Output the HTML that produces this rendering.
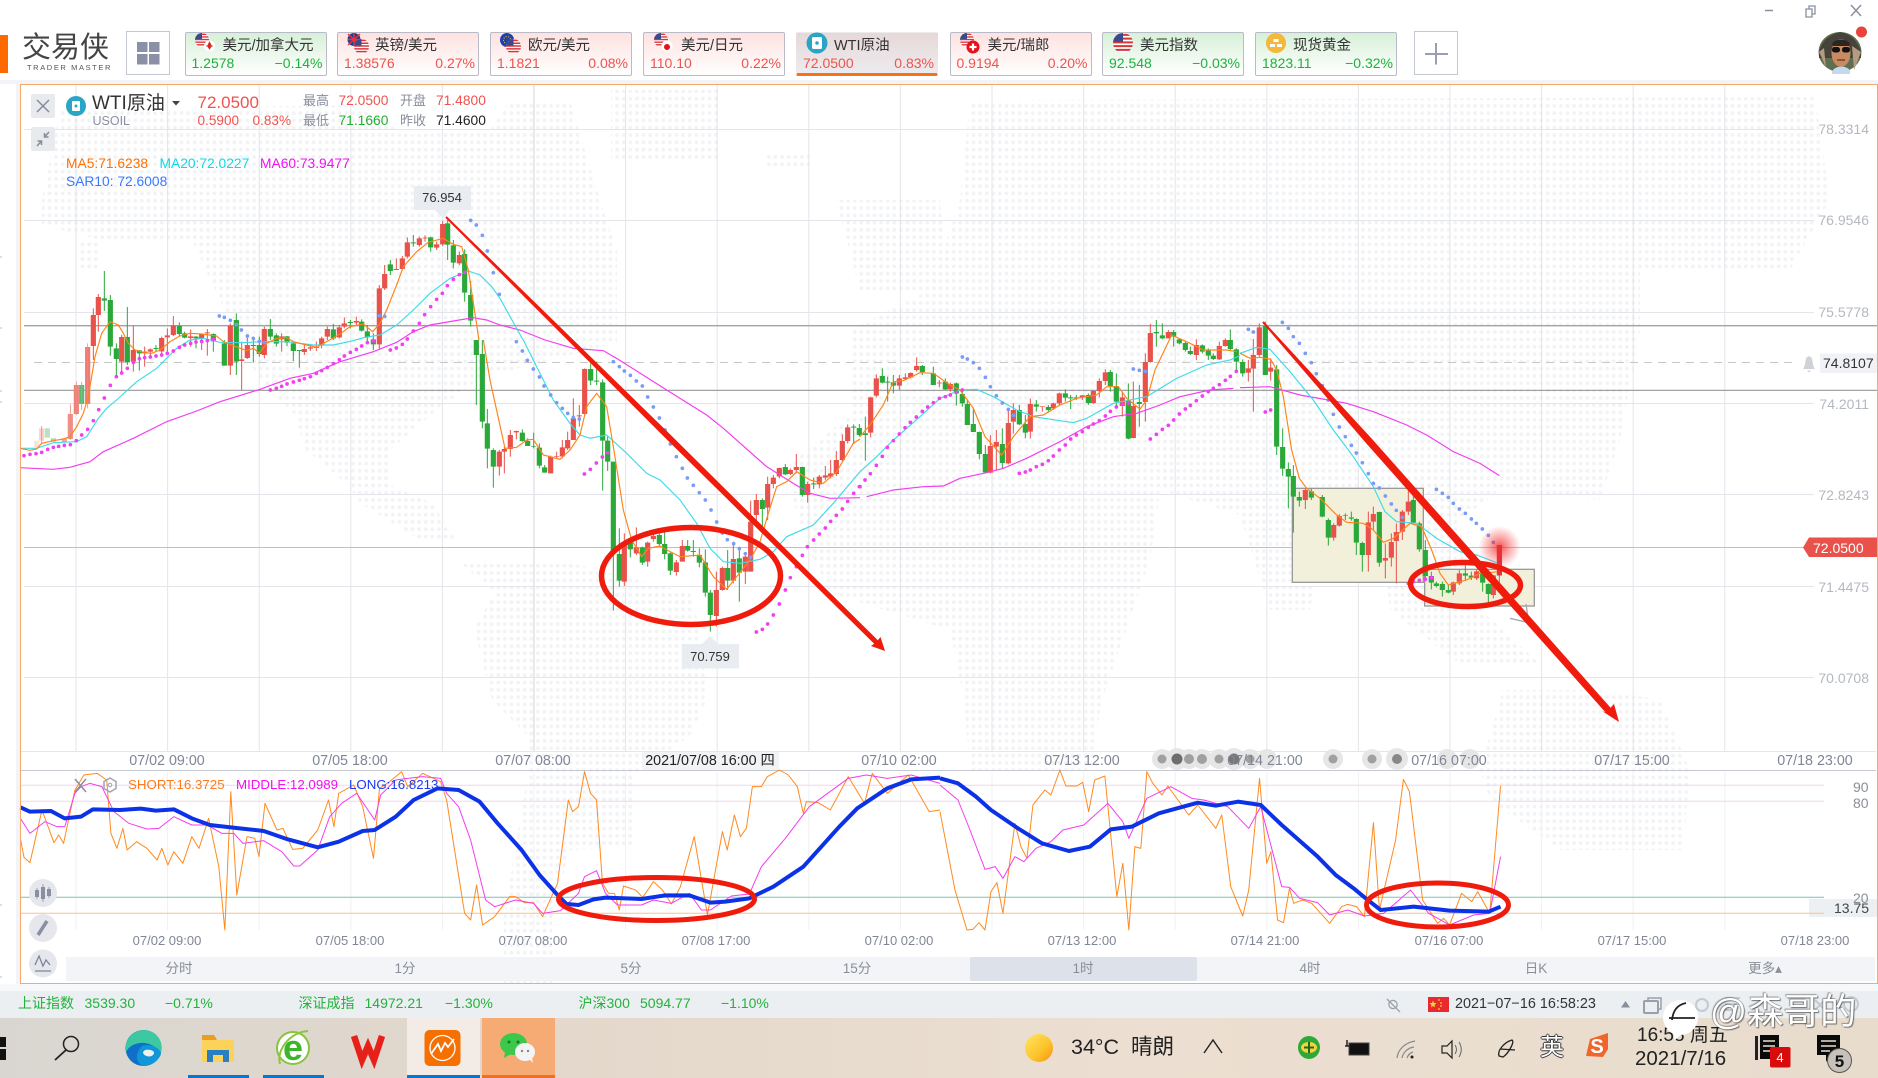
<!DOCTYPE html>
<html lang="zh"><head><meta charset="utf-8"><title>交易侠</title>
<style>
html,body{margin:0;padding:0;background:#fff}
#p{position:relative;width:1878px;height:1078px;overflow:hidden;background:#fff;font-family:"Liberation Sans","Noto Sans CJK SC",sans-serif;color:#333}
.a{position:absolute;box-sizing:border-box}
.t{position:absolute;white-space:nowrap;line-height:1}
.c{transform:translateX(-50%)}
.r{transform:translateX(-100%)}
.tab{position:absolute;top:32px;width:142px;height:44px;box-sizing:border-box;border:1px solid #b9bcc8;border-radius:2px}
.up{background:linear-gradient(#fde2e0,#fff)}
.dn{background:linear-gradient(#d7f0d8,#fff)}
.tab b{position:absolute;left:37px;top:5px;font-weight:400;font-size:14.5px;line-height:17px;color:#333;white-space:nowrap}
.tab i{position:absolute;left:6px;top:23px;font-style:normal;font-size:14px;line-height:15px;white-space:nowrap}
.tab u{position:absolute;right:3px;top:23px;text-decoration:none;font-size:14px;line-height:15px;white-space:nowrap}
.up i,.up u{color:#f0524c}.dn i,.dn u{color:#1cb238}
.ax{font-size:14.3px;color:#808696;top:754px}
.ax2{font-size:13px;color:#808696;top:934px}
.pr{font-size:14px;color:#b4b8c0;left:1869px}
.per{font-size:13.5px;color:#8a8e98;top:962px}
.g{font-size:14px;color:#22b23a;top:996px}
</style></head><body><div id="p">

<!-- panel backgrounds -->
<div class="a" style="left:0;top:80px;width:1878px;height:4px;background:#f2f4f7"></div>
<div class="a" style="left:16px;top:84px;width:4px;height:900px;background:#f2f4f7"></div>
<div class="a" style="left:0;top:984px;width:1878px;height:7px;background:#f7f8fa"></div>
<div class="a" style="left:0;top:991px;width:1878px;height:27px;background:#ebeff2"></div>
<div class="a" style="left:0;top:1018px;width:1878px;height:60px;background:linear-gradient(90deg,#d9d6d1,#e3d8cb 30%,#ecdfd1 60%,#e8dccd)"></div>
<div class="a" style="left:66px;top:957px;width:1809px;height:24px;background:#f2f4f7"></div>
<div class="a" style="left:970px;top:957px;width:227px;height:24px;background:#dde2ea;border-radius:2px"></div>
<div class="a" style="left:642px;top:751px;width:137px;height:19px;background:#f1f3f5"></div>
<div class="a" style="left:1809px;top:899px;width:68px;height:18px;background:#ecf0f3"></div>

<svg class="a" style="left:0;top:0" width="1878" height="1078" viewBox="0 0 1878 1078" xmlns="http://www.w3.org/2000/svg">
<defs>
<pattern id="dots" width="6.6" height="7.3" patternUnits="userSpaceOnUse"><circle cx="3.3" cy="3.6" r="1.9" fill="#f2f3f5"/></pattern>
<radialGradient id="glow"><stop offset="0" stop-color="#f01818" stop-opacity=".75"/><stop offset=".55" stop-color="#f53030" stop-opacity=".35"/><stop offset="1" stop-color="#f53030" stop-opacity="0"/></radialGradient>
<clipPath id="usc"><circle cx="0" cy="0" r="8"/></clipPath>
<symbol id="us" viewBox="-8 -8 16 16" overflow="visible"><g clip-path="url(#usc)"><rect x="-8" y="-8" width="16" height="16" fill="#fff"/><path d="M-8-6.500H8M-8-3.500H8M-8-.5H8M-8 2.500H8M-8 5.500H8" stroke="#d9363a" stroke-width="1.600"/><rect x="-8" y="-8" width="8" height="7" fill="#3c4a8c"/></g></symbol>
</defs>

<!-- left edge ticks -->
<path d="M0 257H2M0 328H2M0 391H2M0 402H2M0 905H2M0 977H2" stroke="#bbb"/>

<!-- world dot map -->
<g fill="url(#dots)">
<path d="M42 200L60 110 354 105 408 135 490 130 510 100 570 100 600 200 617 250 617 343 480 378 432 414 390 450 390 485 432 503 456 540 420 540 360 503 348 485 306 450 294 414 258 378 240 343 192 240 100 240 42 225Z"/>
<path d="M78 240H100V272H78Z"/>
<path d="M462 564L575 564 690 593 700 628 707 700 690 736 635 773 635 847 570 850 552 917 552 983 504 983 504 917 515 850 528 773 528 736 492 700 474 628 495 593Z"/>
<path d="M836 200L940 200 950 290 860 290Z"/>
<path d="M611 90H720V160H611ZM767 155H810V170H767Z"/>
<path d="M970 100L1815 97 1830 200 1790 270 1640 270 1640 330 1620 440 1600 500 1500 490 1460 520 1470 600 1540 664 1460 664 1390 610 1380 530 1330 515 1310 610 1270 610 1240 515 1160 490 1150 560 1102 700 1090 770 970 770 964 700 950 630 830 593 805 540 785 468 851 414 850 330 930 290 960 200Z"/>
<path d="M1503 690L1600 690 1660 700 1690 770 1683 850 1560 850 1490 800 1480 770Z"/>
</g>

<!-- grid main -->
<g stroke="#e3e5ea" stroke-width="1" fill="none">
<path d="M76 84V751M167.600 84V751M259.200 84V751M350.800 84V751M442.400 84V751M625.600 84V751M717.200 84V751M808.800 84V751M900.400 84V751M992 84V751M1083.600 84V751M1175.200 84V751M1266.800 84V751M1358.400 84V751M1450 84V751M1541.600 84V751M1633.200 84V751M1724.800 84V751"/>
<path d="M534 84V751" stroke="#d2d4da"/>
<path d="M24 129.500H1814M24 220.500H1814M24 312.500H1814M24 403.500H1814M24 494.500H1814M24 586.500H1814M24 677.500H1814"/>
<path d="M76 772V930M167.600 772V930M259.200 772V930M350.800 772V930M442.400 772V930M534 772V930M625.600 772V930M717.200 772V930M808.800 772V930M900.400 772V930M992 772V930M1083.600 772V930M1175.200 772V930M1266.800 772V930M1358.400 772V930M1450 772V930M1541.600 772V930M1633.200 772V930M1724.800 772V930" stroke="#f0f1f3"/>
</g>
<path d="M21 751.500H1876" stroke="#e4e6ea"/>
<path d="M21 770.500H1876" stroke="#c6c9d2"/>
<path d="M24 325.700H1877M24 390.400H1877" stroke="#a2a2a2" stroke-width="1.300"/>
<path d="M34 362.500H1795" stroke="#c8c8c8" stroke-dasharray="8 6"/>
<path d="M24 547.500H1808" stroke="#f4aaa6"/>

<!-- highlight boxes -->
<g transform="translate(1240 310) scale(.33333)" fill="#f2f0da" stroke="#9a9a9a" stroke-width="4">
<rect x="157" y="535" width="393" height="282"/>
<rect x="554" y="778" width="329" height="110"/>
<path d="M858 882L866 938 810 925" fill="none" stroke="#a8a8a8"/>
</g>

<!-- group 1 -->
<g transform="translate(20 210) scale(.33333)" fill="none">
<g stroke-width="15.500">
<path d="M50 692V712" stroke="#fbe3e0"/><path d="M65 655V692" stroke="#f9d3cf"/><path d="M82 655V683" stroke="#b9e2c2"/><path d="M100 685V695" stroke="#a4d8b0"/><path d="M133 685V697" stroke="#f2a49e"/><path d="M151 612V687" stroke="#ef8f87"/><path d="M169 525V612" stroke="#ee8279"/><path d="M185 525V582" stroke="#5dba72"/><path d="M203 411V582" stroke="#ee7b71"/>
</g>
<path d="M65 648V700M151 583V690M169 515V615M185 515V600M203 400V595" stroke="#ee8a80" stroke-width="2.500"/>
<path stroke="#e8524a" stroke-width="3" d="M220 295V450M235 252V365M305 375V490M340 347V485M374 410V470M391 415V440M425 380V430M442 355V425M460 318V378M512 358V410M545 370V420M562 357V437M631 340V495M665 395V540M682 380V447M733 350V445M785 370V425M853 405V435M871 405V423M889 395V423M905 380V415M922 350V390M958 345V385M973 322V355M1009 320V345M1078 225V418M1094 165V240M1129 145V180M1147 138V180M1162 82V145M1198 80V110M1215 76V95M1250 95V120M1268 33V108M1318 125V165"/>
<path stroke="#e8524a" stroke-width="15.500" d="M220 315V408M235 261V315M305 381V455M340 420V455M374 425V430M391 418V425M425 384V424M442 376V382M460 347V375M512 379V384M545 373V387M562 367V370M631 347V467M665 448V453M682 405V444M733 357V435M785 379V388M853 417V426M871 412V416M889 411V414M905 385V405M922 357V380M958 352V382M973 340V350M1009 333V338M1078 235V403M1094 192V235M1129 177V180M1147 145V177M1162 97V140M1198 85V105M1215 83V85M1250 103V113M1268 42V103M1318 135V160"/>
<path stroke="#2aa83a" stroke-width="3" d="M253 183V303M271 255V437M289 400V505M322 291V465M358 420V482M408 405V425M478 337V380M494 365V385M528 378V415M580 370V425M613 390V467M649 310V495M700 390V458M718 380V440M751 327V390M769 370V410M801 378V408M820 395V453M838 420V473M940 342V390M991 330V355M1025 328V365M1042 345V395M1060 370V420M1111 150V195M1180 75V110M1232 80V125M1283 30V150M1300 90V175M1334 118V275M1352 213V350"/>
<path stroke="#2aa83a" stroke-width="15.500" d="M253 265V272M271 270V410M289 415V447M322 381V457M358 421V430M408 414V417M478 348V372M494 370V383M528 380V385M580 372V394M613 400V467M649 330V455M700 405V408M718 405V432M751 357V380M769 376V401M801 379V398M820 400V423M838 420V423M940 358V385M991 336V339M1025 335V362M1042 364V382M1060 388V403M1111 163V183M1180 97V100M1232 82V112M1283 40V104M1300 106V158M1334 132V248M1352 255V332"/>
<path stroke="#f43cf0" stroke-width="3.500" d="M0 773 100 778 150 772 210 755 250 725 340 685 440 635 530 603 600 575 720 538 810 505 880 490 960 455 1060 425 1130 397 1180 365 1230 345 1300 333 1360 323 1400 330 1440 345 1500 360 1575 390"/>
<path stroke="#3fdbe8" stroke-width="3.500" d="M0 715 50 715 100 698 170 695 200 680 235 625 260 595 290 570 350 515 410 475 470 415 510 390 550 385 600 397 660 398 730 395 800 395 880 405 940 405 1000 392 1030 383 1080 375 1130 345 1180 300 1230 250 1290 205 1345 183 1380 195 1415 230 1440 265 1509 390"/>
<path stroke="#ff8418" stroke-width="3.500" d="M0 715 30 721 50 717 65 700 100 692 130 687 150 680 170 650 190 610 205 560 225 440 245 370 270 335 295 345 310 370 325 400 345 420 375 428 395 430 420 420 450 395 480 378 510 370 545 372 590 378 610 395 640 407 680 422 700 415 718 430 740 400 770 385 800 383 820 395 860 405 890 412 920 395 960 372 990 350 1030 342 1058 365 1080 340 1100 300 1130 225 1150 170 1190 125 1225 97 1270 85 1300 103 1325 110 1345 180 1377 390"/>
<path stroke="#f040f0" stroke-width="11" stroke-linecap="round" d="M12 737h.1M30 733h.1M48 731h.1M65 727h.1M83 718h.1M100 712h.1M116 709h.1M133 706h.1M151 704h.1M169 692h.1M185 675h.1M203 658h.1M220 632h.1M236 599h.1M253 564h.1M271 526h.1M289 500h.1M305 489h.1M322 475h.1M340 457h.1M358 446h.1M374 443h.1M391 441h.1M408 438h.1M425 435h.1M442 430h.1M460 423h.1M478 412h.1M494 405h.1M512 400h.1M528 396h.1M545 394h.1M562 392h.1M580 388h.1M751 540h.1M769 535h.1M785 529h.1M801 522h.1M820 516h.1M838 511h.1M853 506h.1M871 500h.1M889 490h.1M905 482h.1M922 472h.1M940 461h.1M958 449h.1M973 438h.1M991 427h.1M1009 418h.1M1025 408h.1M1042 398h.1M1060 393h.1M1111 420h.1M1129 414h.1M1147 403h.1M1162 387h.1M1180 363h.1M1198 340h.1M1214 314h.1M1232 290h.1M1250 268h.1M1267 250h.1M1282 227h.1M1300 208h.1M1318 194h.1M1334 187h.1"/>
<path stroke="#7a9cf8" stroke-width="11" stroke-linecap="round" d="M598 318h.1M613 322h.1M631 331h.1M649 344h.1M664 360h.1M682 378h.1M700 385h.1M718 394h.1M733 397h.1M1078 317h.1M1094 319h.1M1352 31h.1M1369 45h.1M1387 76h.1M1402 123h.1M1420 188h.1M1438 253h.1"/>
</g>

<!-- group 2 -->
<g transform="translate(440 340) scale(.33333)" fill="none">
<path stroke="#e8524a" stroke-width="3" d="M178 330V407M193 320V400M211 270V350M229 272V298M332 347V400M350 335V355M367 300V355M383 275V330M400 175V300M418 195V260M434 85V225M553 580V738M589 562V645M623 605V680M640 578V605M709 660V707M727 600V665M829 695V860M847 680V752M880 605V730M916 640V732M932 482V695M949 462V545M983 410V540M1000 405V445M1018 383V415M1051 385V405M1069 342V400M1103 425V488M1138 405V445M1156 378V420M1172 360V415M1189 333V408M1207 283V365M1223 253V310M1292 170V292M1309 103V172M1378 105V150M1396 100V120M1412 97V115M1430 52V95"/>
<path stroke="#e8524a" stroke-width="15.500" d="M178 335V380M193 327V335M211 285V327M229 273V277M332 350V400M350 349V351M367 322V349M383 300V325M400 235V300M418 226V229M434 87V222M553 607V725M589 622V640M623 608V665M640 588V597M709 667V696M727 618V665M829 750V828M847 684V750M880 657V722M916 650V695M932 545V695M949 480V525M983 432V503M1000 413V432M1018 384V409M1051 390V402M1069 381V390M1103 432V465M1138 410V433M1156 406V413M1172 400V410M1189 360V402M1207 303V360M1223 262V303M1292 172V278M1309 115V167M1378 115V137M1396 112V117M1412 99V112M1430 78V90"/>
<path stroke="#2aa83a" stroke-width="3" d="M109 0V195M127 0V265M142 207V385M160 325V443M247 268V305M263 295V318M281 278V325M298 310V385M314 375V398M452 70V135M470 65V135M488 118V452M503 290V393M520 365V812M538 565V740M571 595V652M607 620V675M658 580V620M674 575V658M691 638V705M743 600V635M760 600V650M778 625V682M796 628V770M811 750V875M863 630V750M898 620V785M967 475V570M1036 372V405M1087 380V470M1121 413V447M1241 253V312M1258 252V290M1276 230V362M1327 85V130M1343 110V185M1360 105V160"/>
<path stroke="#2aa83a" stroke-width="15.500" d="M109 0V45M127 42V245M142 250V326M160 330V380M247 278V303M263 303V318M281 318V320M298 323V377M314 382V398M452 87V122M470 122V125M488 127V302M503 302V365M520 365V640M538 642V722M571 607V628M607 622V668M658 585V612M674 612V642M691 640V692M743 618V632M760 633V636M778 645V668M796 667V758M811 758V825M863 684V722M898 655V698M967 480V507M1036 381V403M1087 381V465M1121 430V433M1241 260V263M1258 264V285M1276 280V285M1327 108V128M1343 125V128M1360 127V137"/>
<path stroke="#f43cf0" stroke-width="3.500" d="M315 0 400 25 490 32 530 55 680 150 800 225 850 265 980 380 1060 430 1110 460 1170 475 1260 473"/>
<path stroke="#3fdbe8" stroke-width="3.500" d="M250 0 300 100 340 180 390 250 420 285 450 295 500 285 560 340 620 400 660 420 720 480 770 550 810 625 850 665 900 670 960 658 1000 635 1040 590 1120 555 1180 490 1260 395"/>
<path stroke="#ff8418" stroke-width="3.500" d="M130 0 150 120 195 325 230 322 260 300 280 298 310 345 360 358 390 330 420 285 440 200 470 160 500 200 520 320 550 510 575 600 605 650 625 625 660 618 690 635 720 650 780 645 820 710 860 748 890 710 930 660 960 605 985 520 1010 440 1040 425 1070 395 1110 420 1150 430 1190 395 1240 310 1260 297"/>
<path stroke="#f040f0" stroke-width="11" stroke-linecap="round" d="M433 402h.1M451 388h.1M469 369h.1M487 351h.1M503 338h.1M949 876h.1M967 868h.1M983 852h.1M1000 825h.1M1018 792h.1M1036 750h.1M1051 713h.1M1069 680h.1M1087 646h.1M1102 620h.1M1121 600h.1M1138 582h.1M1156 564h.1M1172 544h.1M1189 526h.1M1207 507h.1M1223 484h.1M1241 460h.1M1258 440h.1"/>
<path stroke="#7a9cf8" stroke-width="11" stroke-linecap="round" d="M229 5h.1M247 33h.1M262 61h.1M280 87h.1M298 111h.1M312 138h.1M332 165h.1M350 188h.1M367 205h.1M383 220h.1M400 232h.1M418 237h.1M520 65h.1M538 80h.1M553 93h.1M571 106h.1M589 123h.1M607 138h.1M623 171h.1M640 201h.1M658 234h.1M675 270h.1M691 312h.1M709 350h.1M727 385h.1M742 414h.1M760 436h.1M778 458h.1M796 480h.1M813 510h.1M830 546h.1M847 579h.1M862 599h.1M881 611h.1M898 626h.1M916 641h.1M932 652h.1"/>
</g>

<!-- group 3 -->
<g transform="translate(860 310) scale(.33333)" fill="none">
<path stroke="#e8524a" stroke-width="3" d="M238 210V232M271 217V245M391 375V490M409 360V482M445 297V463M460 280V370M511 265V385M547 289V305M580 278V300M598 248V285M667 255V270M700 240V282M718 205V262M736 178V225M787 245V320M820 215V385M856 130V335M871 42V158M925 60V85M1009 88V150M1078 95V150M1096 85V110"/>
<path stroke="#e8524a" stroke-width="15.500" d="M238 218V220M271 222V238M391 408V488M409 396V410M445 339V460M460 300V335M511 282V365M547 289V291M580 280V295M598 250V280M667 256V262M700 243V279M718 213V243M736 187V213M787 262V288M820 288V384M856 156V276M871 69V156M925 66V85M1009 105V135M1078 108V148M1096 90V108"/>
<path stroke="#2aa83a" stroke-width="3" d="M187 165V195M220 170V225M256 205V240M289 217V287M307 240V290M322 270V345M340 293V366M358 365V448M376 405V490M427 355V475M478 285V345M496 315V385M529 270V305M565 285V305M616 238V275M632 255V297M649 255V270M685 250V285M751 180V245M769 190V290M805 220V388M838 225V350M889 30V110M907 40V88M941 60V110M958 85V103M976 95V125M991 110V135M1027 103V130M1045 115V150M1060 130V150M1111 58V120M1129 115V180"/>
<path stroke="#2aa83a" stroke-width="15.500" d="M187 168V186M220 190V225M256 215V238M289 220V250M307 252V280M322 282V345M340 342V366M358 366V432M376 432V487M427 402V459M478 300V343M496 342V368M529 283V290M565 291V300M616 250V263M632 262V265M649 262V265M685 255V279M751 186V228M769 228V275M805 272V386M838 276V282M889 66V70M907 76V85M941 66V80M958 88V100M976 99V120M991 123V132M1027 106V125M1045 122V137M1060 137V147M1111 90V117M1129 118V155"/>
<path stroke="#f43cf0" stroke-width="3.500" d="M20 560 100 540 190 530 250 528 300 505 380 488 430 475 500 445 600 395 680 350 760 320 830 310 900 285 960 260 1050 240 1120 235"/>
<path stroke="#3fdbe8" stroke-width="3.500" d="M0 485 50 440 100 390 180 320 240 265 300 240 350 238 400 260 470 300 520 320 640 338 680 325 760 280 860 260 950 205 1040 165 1110 150 1140 137"/>
<path stroke="#ff8418" stroke-width="3.500" d="M0 380 30 345 70 285 100 215 130 212 180 188 220 190 270 225 300 240 340 295 375 380 425 435 460 380 510 320 550 315 600 285 650 265 710 255 740 230 775 230 800 265 840 297 860 270 885 180 935 75 990 100 1030 120 1100 120 1130 125"/>
<path stroke="#f040f0" stroke-width="11" stroke-linecap="round" d="M0 530h.1M15 510h.1M31 491h.1M49 466h.1M67 439h.1M82 412h.1M100 392h.1M118 372h.1M135 353h.1M151 337h.1M169 321h.1M187 304h.1M203 291h.1M220 278h.1M238 265h.1M256 260h.1M271 255h.1M289 247h.1M307 240h.1M478 490h.1M496 486h.1M511 480h.1M529 470h.1M547 463h.1M565 452h.1M580 438h.1M598 420h.1M616 405h.1M632 387h.1M649 375h.1M667 365h.1M685 352h.1M700 342h.1M718 332h.1M736 318h.1M751 304h.1M769 291h.1M787 283h.1M805 279h.1M871 387h.1M889 373h.1M907 358h.1M925 346h.1M941 330h.1M958 312h.1M976 297h.1M991 286h.1M1009 272h.1M1027 258h.1M1045 245h.1M1060 235h.1M1078 224h.1M1096 211h.1M1111 199h.1M1129 184h.1M1147 178h.1M1216 306h.1M1232 300h.1M1250 297h.1"/>
<path stroke="#7a9cf8" stroke-width="11" stroke-linecap="round" d="M307 141h.1M322 147h.1M340 158h.1M358 175h.1M376 202h.1M391 230h.1M409 257h.1M427 279h.1M445 298h.1M460 316h.1M820 177h.1M838 181h.1M856 184h.1M1165 58h.1M1180 66h.1M1198 75h.1M1267 37h.1M1285 55h.1M1300 80h.1M1318 100h.1M1336 130h.1M1354 158h.1M1369 191h.1M1387 227h.1M1405 270h.1M1420 313h.1M1438 351h.1"/>
</g>

<!-- group 4 -->
<g transform="translate(1240 310) scale(.33333)" fill="none">
<path stroke="#e8524a" stroke-width="3" d="M25 150V215M40 87V305M58 40V140M92 145V212M196 535V597M281 640V692M298 612V650M385 605V785M400 590V660M436 700V805M454 670V770M469 640V820M487 600V690M505 540V615M640 815V855M658 780V825M710 780V810M760 795V865M778 705V825"/>
<path stroke="#e8524a" stroke-width="15.500" d="M25 175V188M40 135V176M58 52V135M92 173V185M196 540V570M281 645V683M298 618V647M385 637V735M400 612V635M436 744V752M454 696V743M469 666V693M487 605V665M505 575V605M640 817V845M658 790V820M710 784V805M760 796V855M778 705V797"/>
<path stroke="#2aa83a" stroke-width="3" d="M8 148V200M76 35V195M110 165V435M128 355V498M145 457V595M160 465V668M178 545V590M214 535V570M247 555V622M265 625V707M316 610V630M334 605V632M349 625V735M367 695V785M418 605V770M520 560V640M538 635V725M556 690V805M574 785V838M589 815V832M607 815V860M625 825V850M676 765V810M694 785V810M728 775V845M745 820V880"/>
<path stroke="#2aa83a" stroke-width="15.500" d="M8 156V190M76 48V195M110 178V410M128 411V476M145 477V500M160 498V560M178 561V572M214 544V563M247 561V620M265 630V683M316 616V618M334 622V626M349 627V698M367 699V735M418 606V758M520 570V638M538 640V718M556 720V798M574 798V818M589 820V828M607 822V840M625 840V848M676 790V797M694 797V803M728 780V818M745 822V852"/>
<path stroke="#f43cf0" stroke-width="3.500" d="M0 233 90 230 180 255 320 280 400 305 500 345 560 375 640 425 720 460 778 497"/>
<path stroke="#3fdbe8" stroke-width="3.500" d="M0 130 50 112 90 118 150 185 220 270 280 360 340 440 400 530 435 605 470 635 530 640 590 685 660 725 710 735 780 762"/>
<path stroke="#ff8418" stroke-width="3.500" d="M0 130 30 145 60 142 92 148 110 180 130 260 155 420 178 505 200 535 240 565 290 615 320 637 370 640 400 660 430 697 460 685 510 640 545 650 575 720 600 790 625 825 680 810 720 790 780 785"/>
<path stroke="#f040f0" stroke-width="11" stroke-linecap="round" d="M505 820h.1M520 815h.1M538 811h.1M556 808h.1M574 803h.1"/>
<path stroke="#7a9cf8" stroke-width="11" stroke-linecap="round" d="M316 380h.1M334 406h.1M349 429h.1M367 458h.1M385 491h.1M400 520h.1M418 534h.1M436 558h.1M454 582h.1M469 601h.1M487 622h.1M589 538h.1M607 550h.1M625 562h.1M640 580h.1M658 597h.1M676 610h.1M694 627h.1M709 640h.1M727 657h.1M745 676h.1M760 697h.1"/>
</g>
<circle cx="1499.500" cy="547" r="21" fill="url(#glow)"/>
<path d="M1499.500 545V575" stroke="#e8303a" stroke-width="5"/>

<!-- tag boxes -->
<path d="M414 186H471V210H450L442.500 218 435 210H414Z" fill="#e9ecf0"/>
<path d="M682 644H739V668.500H682ZM702 644L710 636 718 644Z" fill="#e9ecf0"/>
<path d="M1809 537.500H1878V557H1809L1803 547.500Z" fill="#e8524a"/>
<rect x="1820" y="353.500" width="58" height="19.500" fill="#f0f2f5"/>
<path d="M1803 369C1805 367 1805 362 1806 359 1806.500 355.500 1811.500 355.500 1812 359 1813 362 1813 367 1815 369ZM1807 370.500H1811L1809 372.500Z" fill="#cfd2d8"/>

<!-- axis blobs -->
<g fill="#e6e6e6"><circle cx="1162" cy="759" r="10"/><circle cx="1177" cy="759" r="11"/><circle cx="1189" cy="759" r="10"/><circle cx="1202" cy="759" r="10"/><circle cx="1219" cy="759" r="10"/><circle cx="1234" cy="759" r="11"/><circle cx="1250" cy="759" r="10"/><circle cx="1267" cy="759" r="10"/><circle cx="1333" cy="759" r="10"/><circle cx="1372" cy="759" r="10"/><circle cx="1397" cy="759" r="11"/><circle cx="1447" cy="759" r="10"/><circle cx="1470" cy="759" r="10"/></g>
<g fill="#a0a0a0"><circle cx="1162" cy="759" r="4.500"/><circle cx="1177" cy="759" r="5.500" fill="#6e6e6e"/><circle cx="1189" cy="759" r="5"/><circle cx="1202" cy="759" r="5"/><circle cx="1219" cy="759" r="4.500"/><circle cx="1234" cy="759" r="5.500" fill="#777"/><circle cx="1250" cy="759" r="4.500"/><circle cx="1333" cy="759" r="4.500"/><circle cx="1372" cy="759" r="4.500"/><circle cx="1397" cy="759" r="5" fill="#888"/></g>

<!-- indicator -->
<path d="M20 785.300H1824M20 801.300H1824" stroke="#f5d4f0"/>
<path d="M20 897.300H1824" stroke="#7fc4b5"/>
<path d="M20 913.300H1824" stroke="#fbc090"/>
<g transform="translate(0 750) scale(.5995 .33333)" fill="none" stroke-linejoin="round">
<path vector-effect="non-scaling-stroke" stroke="#ff8a1e" stroke-width="1" d="M34 265 40 322 50 338 70 180 90 278 98 255 106 280 125 120 140 75 162 70 178 90 185 250 195 295 205 235 212 300 228 275 245 295 262 330 270 295 280 345 290 305 305 340 320 260 332 295 348 205 365 350 375 540 385 125 395 435 412 260 425 265 432 320 442 160 462 240 472 235 488 298 505 295 530 240 548 150 557 230 565 130 590 105 605 170 623 325 633 115 650 95 670 65 680 110 705 70 735 95 745 150 775 490 785 510 795 405 805 525 825 500 850 440 860 440 875 458 890 458 905 500 930 400 948 150 955 185 965 170 975 65 985 130 995 150 1005 400 1015 430 1025 430 1033 480 1040 408 1060 420 1072 442 1090 395 1105 420 1120 462 1135 410 1158 260 1180 495 1205 245 1213 300 1225 195 1235 260 1245 235 1255 110 1270 110 1280 80 1300 60 1315 75 1330 110 1340 190 1345 155 1365 158 1385 180 1415 80 1442 160 1455 70 1480 130 1515 75 1550 185 1568 180"/>
<path vector-effect="non-scaling-stroke" stroke="#f43cf0" stroke-width="1" d="M34 205 50 250 75 215 95 230 108 230 125 130 135 110 150 100 170 110 190 185 215 220 245 237 265 235 290 200 320 225 345 225 370 250 390 250 405 280 440 272 470 305 490 348 500 348 530 300 550 200 570 160 595 130 625 210 635 135 660 90 680 85 705 80 735 85 745 130 765 170 785 270 810 450 825 470 860 450 890 460 905 490 935 482 965 430 975 380 995 362 1010 430 1030 465 1070 465 1090 450 1120 460 1150 430 1170 480 1185 480 1220 438 1250 432 1270 350 1310 265 1350 170 1415 85 1445 75 1480 85 1520 75 1568 100"/>
<path vector-effect="non-scaling-stroke" stroke="#0c32e8" stroke-width="4" d="M34 172 50 185 85 183 108 205 135 200 155 178 200 180 235 176 260 182 290 178 320 205 350 225 400 235 440 243 480 268 530 292 565 275 605 243 625 240 660 200 690 150 730 115 765 120 800 155 830 220 870 300 900 375 930 435 945 462 965 465 990 448 1010 443 1070 447 1110 436 1150 436 1185 458 1210 455 1250 445 1290 410 1340 350 1400 230 1430 175 1480 115 1520 88 1568 83"/>
</g>
<g transform="translate(940 750) scale(.5995 .33333)" fill="none" stroke-linejoin="round">
<path vector-effect="non-scaling-stroke" stroke="#ff8a1e" stroke-width="1" d="M0 185 25 420 45 540 55 538 65 518 75 540 85 425 95 398 105 490 125 220 135 290 145 325 155 165 175 120 185 135 200 60 210 108 228 108 238 97 248 185 258 90 275 78 295 440 305 340 315 540 325 290 335 295 345 65 355 100 370 135 380 108 415 195 430 165 460 235 470 195 485 410 505 498 515 420 533 85 545 340 552 305 563 510 573 518 583 415 590 460 605 450 620 460 635 490 650 520 670 470 680 463 695 470 708 500 723 218 733 480 760 270 773 88 783 125 805 450 830 520 840 505 850 525 870 430 887 455 897 425 917 490 935 108"/>
<path vector-effect="non-scaling-stroke" stroke="#f43cf0" stroke-width="1" d="M0 105 30 150 50 240 75 358 92 350 105 385 125 320 140 335 160 295 185 275 205 240 240 225 280 160 305 215 315 265 345 145 385 110 420 145 440 150 480 170 515 235 535 170 570 410 583 412 600 445 630 458 650 495 680 480 708 498 740 490 785 420 815 490 850 525 890 495 917 490 935 320"/>
<path vector-effect="non-scaling-stroke" stroke="#0c32e8" stroke-width="4" d="M0 85 30 100 60 140 85 180 130 235 170 280 215 303 250 290 285 238 320 230 365 190 430 158 460 167 497 155 535 165 570 225 630 320 660 375 690 415 710 445 735 480 790 470 850 482 915 485 935 470"/>
</g>

<!-- chart frame -->
<rect x="20.500" y="84.500" width="1857" height="899" fill="none" stroke="#f8a86a"/>

<!-- hand-drawn red annotations -->
<g fill="#ef1c0e">
<path d="M446.700 216.300L667.100 431.400 877.800 640.200 880.500 637 885 651 871 646 874.200 643.800 662.900 435.600 445.300 217.700Z"/>
<path d="M1263.700 321.300L1371.700 438.600 1478.100 558.300 1610.600 707.700 1614 704 1619 722 1602 711 1605.400 712.300 1472.900 563.700 1366.300 443.400 1262.300 322.700Z"/>
</g>
<g fill="none" stroke="#ef1c0e">
<ellipse cx="691" cy="576" rx="89.500" ry="48.500" stroke-width="5.500"/>
<ellipse cx="1465.500" cy="584.500" rx="55" ry="22" stroke-width="5.500" transform="rotate(1 1465 584)"/>
<ellipse cx="656.500" cy="899" rx="98" ry="21.500" stroke-width="5"/>
<ellipse cx="1437.500" cy="905" rx="71" ry="22" stroke-width="5"/>
</g>

<!-- left tool buttons -->
<rect x="31" y="94" width="24" height="24" rx="2" fill="#e8eaee"/>
<path d="M37 100L49 112M49 100L37 112" stroke="#868b9c" stroke-width="1.500"/>
<rect x="31" y="127" width="24" height="24" rx="2" fill="#e8eaee"/>
<path d="M49 132L44.500 137M44.500 133V137H48.500M37 146L41.500 141M41.500 145V141H37.500" stroke="#868b9c" stroke-width="1.500" fill="none"/>
<circle cx="76" cy="106" r="10" fill="#2aa5c8"/><rect x="72" y="101" width="8" height="10" rx="1" fill="#fff"/><circle cx="76" cy="106" r="1.500" fill="#2aa5c8"/>
<path d="M172 101H180L176 105.500Z" fill="#444"/>
<circle cx="43" cy="893" r="14" fill="#e5e7ec"/><path d="M37 888V899M43 884V902M49 887V898" stroke="#9a9eb0" stroke-width="1"/><path d="M37 890V897M43 887V899M49 889V896" stroke="#8a8fa2" stroke-width="4"/>
<circle cx="43" cy="928" r="14" fill="#e5e7ec"/><path d="M38 935L47 921" stroke="#8a8fa2" stroke-width="3.500"/>
<circle cx="43" cy="963.500" r="14" fill="#e5e7ec"/><path d="M35 965L39 956 43 966 46 960 50 965M35 971H51" stroke="#7f8498" stroke-width="1.300" fill="none"/>
<path d="M75 779L86 792M86 779L75 792" stroke="#8a8e9c" stroke-width="1.500"/>
<path d="M110 778L116 781.500V788.500L110 792 104 788.500V781.500Z" fill="none" stroke="#a0a4b0" stroke-width="1.500"/><circle cx="110" cy="785" r="1.800" fill="none" stroke="#a0a4b0"/>

<!-- header: grid icon, flags -->
<g fill="#8a90a6"><rect x="137" y="42" width="10.500" height="10"/><rect x="149" y="42" width="10.500" height="10"/><rect x="137" y="54" width="10.500" height="10.500"/><rect x="149" y="54" width="10.500" height="10.500"/></g>
<path d="M1436 43V64.500M1425 54H1448" stroke="#9a9eb0" stroke-width="2"/>
<path d="M1765 10.500H1773" stroke="#8a90a0" stroke-width="1.500"/>
<path d="M1806 9H1812V17H1806ZM1809 9V6H1815V14H1812" fill="none" stroke="#8a90a0" stroke-width="1.300"/>
<path d="M1851 5L1861 16M1861 5L1851 16" stroke="#8a90a0" stroke-width="1.500"/>
</svg>

<!-- logo -->
<div class="a" style="left:0;top:35px;width:8px;height:38px;background:#ff6a00"></div>
<div class="t" style="left:22px;top:34px;font-size:29px;color:#444;letter-spacing:0">交易侠</div>
<div class="t" style="left:27px;top:64px;font-size:7.500px;color:#555;letter-spacing:1.600px">TRADER MASTER</div>
<div class="a" style="left:126px;top:31px;width:44px;height:44px;border:1px solid #c4c8d0"></div>
<div class="a" style="left:1414px;top:31px;width:44px;height:44px;border:1px solid #c4c8d0"></div>

<!-- tabs -->
<div class="tab dn" style="left:184.500px"><b>美元/加拿大元</b><i>1.2578</i><u>−0.14%</u></div>
<div class="tab up" style="left:337px"><b>英镑/美元</b><i>1.38576</i><u>0.27%</u></div>
<div class="tab up" style="left:490px"><b>欧元/美元</b><i>1.1821</i><u>0.08%</u></div>
<div class="tab up" style="left:643px"><b>美元/日元</b><i>110.10</i><u>0.22%</u></div>
<div class="tab up" style="left:796px;background:linear-gradient(#e7d8d8,#ecebee);border:1px solid transparent;border-bottom:3px solid #f97316"><b>WTI原油</b><i>72.0500</i><u>0.83%</u></div>
<div class="tab up" style="left:949.500px"><b>美元/瑞郎</b><i>0.9194</i><u>0.20%</u></div>
<div class="tab dn" style="left:1102px"><b>美元指数</b><i>92.548</i><u>−0.03%</u></div>
<div class="tab dn" style="left:1255px"><b>现货黄金</b><i>1823.11</i><u>−0.32%</u></div>

<!-- flags and avatar over tabs -->
<svg class="a" style="left:0;top:0" width="1878" height="80" viewBox="0 0 1878 80" xmlns="http://www.w3.org/2000/svg">
<use href="#us" x="195" y="33" width="14" height="14"/>
<circle cx="209.500" cy="46" r="5.500" fill="#fff"/><path d="M209.500 42L211.500 46 209.500 49 207.500 46Z M206 46H213" fill="#d8261c" stroke="#d8261c" stroke-width=".8"/>
<circle cx="354" cy="39.500" r="6.500" fill="#2a3a8c"/><path d="M348 34L360 45M360 34L348 45M354 33V46M347.500 39.500H360.500" stroke="#e8343a" stroke-width="1.500"/>
<use href="#us" x="354" y="39" width="15" height="15"/>
<circle cx="507" cy="40" r="7" fill="#2240a8"/><circle cx="507" cy="40" r="3.500" fill="none" stroke="#e6c832" stroke-dasharray="1 1.500"/>
<use href="#us" x="506" y="39" width="15" height="15"/>
<use href="#us" x="654" y="33" width="14" height="14"/>
<circle cx="667" cy="46" r="5.500" fill="#fff"/><circle cx="667" cy="47" r="3" fill="#e8101a"/>
<circle cx="817" cy="43" r="10.500" fill="#2aa5c8"/><rect x="812" y="37" width="10" height="12" rx="1.500" fill="#fff"/><circle cx="817" cy="43" r="1.800" fill="#2aa5c8"/>
<use href="#us" x="960" y="33" width="14" height="14"/>
<circle cx="973" cy="47" r="6.500" fill="#e8101a"/><path d="M973 43.500V50.500M969.500 47H976.500" stroke="#fff" stroke-width="2.200"/>
<use href="#us" x="1113" y="33" width="20" height="20"/>
<circle cx="1276" cy="43" r="10" fill="#f2b93c"/><path d="M1273.500 39H1278.500V42H1273.500ZM1270 44H1275V47H1270ZM1277 44H1282V47H1277Z" fill="#fff"/>
<!-- avatar -->
<ellipse cx="1840" cy="52" rx="21.500" ry="20" fill="#5f6e50"/>
<path d="M1819 52C1822 42 1826 36 1840 32 1852 34 1858 42 1861 52V58H1819Z" fill="#46443a"/>
<path d="M1858 60L1861 52 1852 46 1854 70ZM1822 58L1819 52 1824 48 1826 68Z" fill="#b59a84"/>
<ellipse cx="1841" cy="53" rx="9.500" ry="14" fill="#c78a62"/>
<path d="M1832 44C1835 38 1847 38 1850 44L1849 46H1833Z" fill="#2b2622"/>
<rect x="1832" y="47" width="8" height="5.500" rx="2.500" fill="#121212"/><rect x="1842" y="47" width="8" height="5.500" rx="2.500" fill="#121212"/>
<path d="M1837 60H1845" stroke="#7a4030" stroke-width="1.500"/>
<path d="M1832 72C1834 65 1848 65 1850 71V74H1832Z" fill="#c4d8f0"/>
<circle cx="1861.500" cy="32" r="5.500" fill="#e8443a"/>
</svg>

<!-- instrument header -->
<div class="t" style="left:92px;top:94px;font-size:19px;color:#333">WTI原油</div>
<div class="t" style="left:92.500px;top:114.500px;font-size:12.500px;color:#8a8fa0">USOIL</div>
<div class="t" style="left:197.500px;top:93.500px;font-size:17px;color:#ef5350">72.0500</div>
<div class="t" style="left:197.500px;top:114px;font-size:13.600px;color:#ef5350">0.5900</div>
<div class="t" style="left:252.500px;top:114px;font-size:13.600px;color:#ef5350">0.83%</div>
<div class="t" style="left:303px;top:94px;font-size:13px;color:#888d9c">最高</div>
<div class="t" style="left:338.500px;top:94px;font-size:13.800px;color:#ef5350">72.0500</div>
<div class="t" style="left:400px;top:94px;font-size:13px;color:#888d9c">开盘</div>
<div class="t" style="left:436px;top:94px;font-size:13.800px;color:#ef5350">71.4800</div>
<div class="t" style="left:303px;top:114px;font-size:13px;color:#888d9c">最低</div>
<div class="t" style="left:338.500px;top:114px;font-size:13.800px;color:#1fb030">71.1660</div>
<div class="t" style="left:400px;top:114px;font-size:13px;color:#888d9c">昨收</div>
<div class="t" style="left:436px;top:114px;font-size:13.800px;color:#222">71.4600</div>
<div class="t" style="left:66px;top:156.500px;font-size:13.800px;color:#ff7000">MA5:71.6238</div>
<div class="t" style="left:159.500px;top:156.500px;font-size:13.800px;color:#10d8e8">MA20:72.0227</div>
<div class="t" style="left:260px;top:156.500px;font-size:13.800px;color:#f010f0">MA60:73.9477</div>
<div class="t" style="left:66px;top:175px;font-size:13.800px;color:#3a78ff">SAR10: 72.6008</div>

<!-- price axis -->
<div class="t pr r" style="top:122px">78.3314</div>
<div class="t pr r" style="top:213px">76.9546</div>
<div class="t pr r" style="top:305px">75.5778</div>
<div class="t pr r" style="top:397px">74.2011</div>
<div class="t pr r" style="top:488px">72.8243</div>
<div class="t pr r" style="top:580px">71.4475</div>
<div class="t pr r" style="top:671px">70.0708</div>
<div class="t" style="left:1823px;top:356px;font-size:14px;color:#333">74.8107</div>
<div class="t" style="left:1813px;top:540.500px;font-size:14px;color:#fff">72.0500</div>
<div class="t c" style="left:442px;top:191px;font-size:13px;color:#333">76.954</div>
<div class="t c" style="left:710px;top:650px;font-size:13px;color:#333">70.759</div>

<!-- time axis -->
<div class="t c ax" style="left:167px">07/02 09:00</div>
<div class="t c ax" style="left:350px">07/05 18:00</div>
<div class="t c ax" style="left:533px">07/07 08:00</div>
<div class="t c ax" style="left:710px;color:#222">2021/07/08 16:00 四</div>
<div class="t c ax" style="left:899px">07/10 02:00</div>
<div class="t c ax" style="left:1082px">07/13 12:00</div>
<div class="t c ax" style="left:1265px">07/14 21:00</div>
<div class="t c ax" style="left:1449px">07/16 07:00</div>
<div class="t c ax" style="left:1632px">07/17 15:00</div>
<div class="t c ax" style="left:1815px">07/18 23:00</div>
<div class="t c ax2" style="left:167px">07/02 09:00</div>
<div class="t c ax2" style="left:350px">07/05 18:00</div>
<div class="t c ax2" style="left:533px">07/07 08:00</div>
<div class="t c ax2" style="left:716px">07/08 17:00</div>
<div class="t c ax2" style="left:899px">07/10 02:00</div>
<div class="t c ax2" style="left:1082px">07/13 12:00</div>
<div class="t c ax2" style="left:1265px">07/14 21:00</div>
<div class="t c ax2" style="left:1449px">07/16 07:00</div>
<div class="t c ax2" style="left:1632px">07/17 15:00</div>
<div class="t c ax2" style="left:1815px">07/18 23:00</div>

<!-- indicator labels -->
<div class="t" style="left:128px;top:778px;font-size:13.300px;color:#ff7a1a">SHORT:16.3725</div>
<div class="t" style="left:236px;top:778px;font-size:13.300px;color:#f010f0">MIDDLE:12.0989</div>
<div class="t" style="left:349px;top:778px;font-size:13.300px;color:#1a3cf0">LONG:16.8213</div>
<div class="t" style="left:1853px;top:780px;font-size:14px;color:#8a8e98">90</div>
<div class="t" style="left:1853px;top:796px;font-size:14px;color:#8a8e98">80</div>
<div class="t" style="left:1853px;top:891px;font-size:14px;color:#8a8e98">20</div>
<div class="t" style="left:1834px;top:901px;font-size:14px;color:#444">13.75</div>

<!-- periods -->
<div class="t c per" style="left:179px">分时</div>
<div class="t c per" style="left:405px">1分</div>
<div class="t c per" style="left:631px">5分</div>
<div class="t c per" style="left:857px">15分</div>
<div class="t c per" style="left:1083px">1时</div>
<div class="t c per" style="left:1310px">4时</div>
<div class="t c per" style="left:1536px">日K</div>
<div class="t c per" style="left:1765px">更多▴</div>

<!-- status bar -->
<div class="t g" style="left:18px">上证指数</div>
<div class="t g" style="left:84.500px">3539.30</div>
<div class="t g" style="left:165px">−0.71%</div>
<div class="t g" style="left:298.500px">深证成指</div>
<div class="t g" style="left:364.500px">14972.21</div>
<div class="t g" style="left:445px">−1.30%</div>
<div class="t g" style="left:578.500px">沪深300</div>
<div class="t g" style="left:640px">5094.77</div>
<div class="t g" style="left:721px">−1.10%</div>
<div class="t" style="left:1455px;top:997px;font-size:14.400px;color:#333">2021−07−16 16:58:23</div>

<!-- taskbar -->
<div class="a" style="left:407px;top:1018px;width:73px;height:60px;background:#f3ece6"></div>
<div class="a" style="left:482px;top:1018px;width:73px;height:60px;background:#f5ab73"></div>
<div class="a" style="left:188px;top:1075px;width:61px;height:3px;background:#0078d4"></div>
<div class="a" style="left:263px;top:1075px;width:61px;height:3px;background:#0078d4"></div>
<div class="a" style="left:407px;top:1075px;width:73px;height:3px;background:#0078d4"></div>
<div class="a" style="left:482px;top:1075px;width:73px;height:3px;background:#f07020"></div>

<svg class="a" style="left:0;top:990px" width="1878" height="88" viewBox="0 990 1878 88" xmlns="http://www.w3.org/2000/svg">
<defs><linearGradient id="sun2" x1="0" y1="0" x2="1" y2="1"><stop offset="0" stop-color="#ffe660"/><stop offset=".6" stop-color="#fcc22a"/><stop offset="1" stop-color="#f7900e"/></linearGradient></defs>
<path d="M0 1037H6V1047H0ZM0 1049H6V1060H0Z" fill="#111"/>
<circle cx="71" cy="1044" r="7.500" fill="none" stroke="#222" stroke-width="1.500"/><path d="M66 1050L55 1060" stroke="#222" stroke-width="1.800"/>
<circle cx="143.500" cy="1048" r="18" fill="#0e70c8"/>
<path d="M126 1044C130 1030 145 1027 154 1033 161 1038 163 1046 161 1053 156 1046 148 1042 140 1043 132 1044 128 1048 126 1052Z" fill="#3cc8a0"/>
<path d="M142 1046C150 1043 161 1048 161 1054 158 1062 150 1066 144 1066 136 1064 134 1054 142 1046Z" fill="#1196d8"/>
<path d="M145 1050C152 1049 156 1052 153 1055 150 1058 143 1056 143 1052Z" fill="#ebf2ee"/>
<path d="M202 1035H214L217 1040H202Z" fill="#e8a020"/><rect x="202" y="1040" width="32" height="22" rx="1.500" fill="#fbd25a"/>
<path d="M207 1062V1050H229V1062H223V1055H213V1062Z" fill="#2a7fc0"/>
<circle cx="293" cy="1048" r="16" fill="#fff" stroke="#86c440" stroke-width="2"/>
<text x="293" y="1060" font-family="Liberation Sans" font-weight="700" font-size="36" fill="#3cb52c" text-anchor="middle">e</text>
<path d="M280 1064C276 1050 290 1032 308 1031" fill="none" stroke="#8cc63f" stroke-width="2"/>
<path d="M354 1036L362 1060 368 1046 374 1060 382 1036" fill="none" stroke="#e8201a" stroke-width="6.500"/>
<rect x="424.500" y="1030" width="36" height="36" rx="5" fill="#f57000"/>
<circle cx="442.500" cy="1048" r="12.500" fill="none" stroke="#fff" stroke-width="1.300"/>
<path d="M431 1054L438 1044 441 1051 445 1043 448 1047 454 1039" fill="none" stroke="#fff" stroke-width="1.800"/>
<ellipse cx="513.500" cy="1044" rx="13.500" ry="11" fill="#3cc84a"/><path d="M505 1052L504 1058 511 1054Z" fill="#3cc84a"/>
<circle cx="509" cy="1042" r="1.500" fill="#167a22"/><circle cx="518" cy="1042" r="1.500" fill="#167a22"/>
<ellipse cx="525" cy="1052" rx="10" ry="9" fill="#f4f4f4"/><path d="M529 1059L533 1063 532 1057Z" fill="#f4f4f4"/>
<circle cx="522" cy="1051" r="1.200" fill="#888"/><circle cx="528" cy="1051" r="1.200" fill="#888"/>
<ellipse cx="1039" cy="1048" rx="14" ry="14" fill="url(#sun2)"/>
<path d="M1204 1053L1213 1040 1222 1053" fill="none" stroke="#222" stroke-width="1.400"/>
<ellipse cx="1309" cy="1047.500" rx="11" ry="11.500" fill="#2ea836"/><ellipse cx="1309" cy="1047.500" rx="8" ry="5.500" fill="#f6d23a"/><path d="M1309 1042V1053M1304 1047.500H1314" stroke="#186a26" stroke-width="2"/>
<rect x="1349" y="1043" width="20" height="12" fill="#111" stroke="#444"/><path d="M1345 1046H1349M1347 1040V1046" stroke="#222" stroke-width="1.500"/>
<path d="M1397 1058C1398 1050 1404 1043 1415 1041M1402 1058C1403 1053 1407 1048 1414 1047M1407 1058C1408 1055 1410 1053 1413 1052" fill="none" stroke="#888" stroke-width="1.200"/><circle cx="1412" cy="1057" r="1.500" fill="#222"/>
<path d="M1442 1046H1447L1452 1041V1058L1447 1053H1442Z" fill="none" stroke="#222" stroke-width="1.200"/><path d="M1455 1045C1457 1048 1457 1051 1455 1054M1459 1042C1462 1047 1462 1052 1459 1057" fill="none" stroke="#666" stroke-width="1"/>
<path d="M1499 1056C1497 1050 1505 1042 1512 1040 1515 1042 1508 1054 1503 1057ZM1500 1049L1515 1050" fill="none" stroke="#222" stroke-width="1.300"/>
<path d="M1590 1039L1608 1033 1608 1049 1603 1057 1586 1056Z" fill="#f0652a"/>
<text x="1597" y="1053" font-family="Liberation Sans" font-weight="700" font-size="20" fill="#fff" text-anchor="middle">S</text>
<rect x="1755" y="1036" width="3" height="24" fill="#222"/><rect x="1760" y="1035" width="19" height="24" fill="#0a0a0a"/><path d="M1763 1041H1775M1763 1046H1775M1763 1051H1771" stroke="#e9e0d2" stroke-width="1.400"/>
<rect x="1770" y="1047" width="20.500" height="20.500" rx="2" fill="#d90c0c"/>
<text x="1780" y="1062" font-family="Liberation Sans" font-size="13" fill="#fff" text-anchor="middle">4</text>
<path d="M1817 1035H1840V1055H1830L1826 1062V1055H1817Z" fill="#0a0a0a"/><path d="M1821 1041H1836M1821 1046H1836M1821 1051H1830" stroke="#e9e0d2" stroke-width="1.400"/>
<circle cx="1839.500" cy="1060.500" r="12" fill="#c6c2ba" stroke="#555"/>
<text x="1839.500" y="1067" font-family="Liberation Sans" font-weight="700" font-size="17" fill="#111" text-anchor="middle">5</text>
<path d="M1387 999L1400 1012M1389 1003C1392 998 1398 1001 1397 1006 1394 1011 1388 1008 1389 1003Z" fill="none" stroke="#9aa0aa" stroke-width="1.300"/>
<rect x="1428" y="997" width="21" height="15" fill="#e8292e"/><path d="M1433 1000.500L1434 1003 1436.500 1003 1434.500 1005 1435 1007.500 1433 1006 1431 1007.500 1431.500 1005 1429.500 1003 1432 1003Z" fill="#f7d83a"/><circle cx="1439" cy="1000" r=".9" fill="#f7d83a"/><circle cx="1441" cy="1003" r=".9" fill="#f7d83a"/><circle cx="1441" cy="1006" r=".9" fill="#f7d83a"/><circle cx="1439" cy="1009" r=".9" fill="#f7d83a"/>
<path d="M1621 1007.500L1625.500 1001 1630 1007.500Z" fill="#8a8fa0"/>
<rect x="1644" y="1001" width="14" height="12" rx="1" fill="none" stroke="#9aa0aa" stroke-width="2"/><path d="M1648 1001V998H1661V1009H1658" fill="none" stroke="#9aa0aa" stroke-width="1.500"/>
<g fill="none" stroke="#c5cad2" stroke-width="2"><circle cx="1702" cy="1005" r="6"/><path d="M1725 998H1740M1725 1004H1740M1725 1010H1736"/><path d="M1815 1000L1825 1010M1825 1000L1815 1010"/><circle cx="1851" cy="1004" r="7"/></g>
</svg>

<div class="t" style="left:1071px;top:1037px;font-size:21.500px;color:#222">34°C&nbsp;&nbsp;晴朗</div>
<div class="t" style="left:1540px;top:1036px;font-size:24px;color:#fff;text-shadow:-1px 0 0 #333,1px 0 0 #333,0 -1px 0 #333,0 1px 0 #333">英</div>
<div class="t" style="left:1637px;top:1026px;font-size:19px;color:#222">16:58 周五</div>
<div class="t" style="left:1635px;top:1049px;font-size:20.500px;color:#222">2021/7/16</div>

<!-- watermark -->
<svg class="a" style="left:1660px;top:998px" width="42" height="44" viewBox="1660 998 42 44" xmlns="http://www.w3.org/2000/svg">
<circle cx="1680.500" cy="1017.500" r="17.500" fill="#fff"/>
<path d="M1676 1019C1674 1026 1672 1032 1675 1040L1684 1032Z" fill="#fff"/>
<path d="M1672 1020C1673 1012 1676 1005 1686 1003M1669 1018H1695" fill="none" stroke="#222" stroke-width="1.800"/>
</svg>
<div class="t" style="left:1710px;top:994px;font-size:36.500px;color:#fff;text-shadow:0 0 1px #444,1px 1px 1px rgba(60,60,60,.65),-1px -1px 1px rgba(60,60,60,.4)">@森哥的</div>

</div></body></html>
